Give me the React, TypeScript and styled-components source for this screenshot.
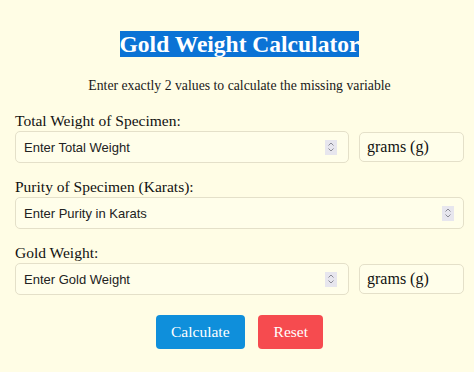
import React from "react";
import styled, { createGlobalStyle } from "styled-components";

const GlobalStyle = createGlobalStyle`
  html, body {
    margin: 0;
    padding: 0;
    background: #fffde5;
  }
  * { box-sizing: border-box; }
`;

const serif = `"Liberation Serif", "Times New Roman", serif`;
const sans = `"Liberation Sans", Arial, sans-serif`;

const Page = styled.div`
  min-height: 372px;
  padding: 31px 10px 0 15px;
  font-family: ${serif};
  color: #111;
  background: #fffde5;
`;

const Title = styled.h1`
  margin: 0;
  text-align: center;
  font-size: 23.5px;
  font-weight: bold;
  line-height: normal;
`;

const Highlight = styled.span`
  background: #0b73d5;
  color: #ffffff;
`;

const Subtitle = styled.p`
  margin: 20px 0 0;
  text-align: center;
  font-size: 13.75px;
  line-height: normal;
  color: #1a1a1a;
`;

const Form = styled.div`
  margin-top: 18px;
  display: flex;
  flex-direction: column;
  gap: 15px;
`;

const Field = styled.div`
  display: flex;
  flex-direction: column;
  gap: 1px;
`;

const Label = styled.label`
  font-size: 15.5px;
  line-height: 18px;
  color: #111;
`;

const Row = styled.div`
  display: flex;
  align-items: center;
  gap: 10px;
`;

const InputBox = styled.div`
  flex: 1;
  height: 32px;
  display: flex;
  align-items: center;
  border: 1px solid #e4e0c9;
  border-radius: 5px;
  background: #fffeea;
  padding: 0 ${(p: { $pr?: number }) => p.$pr ?? 11}px 0 8px;
`;

const Input = styled.input`
  flex: 1;
  min-width: 0;
  border: none;
  outline: none;
  background: transparent;
  padding: 0;
  font-family: ${sans};
  font-size: 13px;
  color: #222;
  &::placeholder {
    color: #222;
    opacity: 1;
  }
`;

const Spinner = styled.div`
  width: 12px;
  height: 15px;
  background: #e7e6ee;
  display: flex;
  align-items: center;
  justify-content: center;
`;

const Unit = styled.div`
  width: 105px;
  height: 30px;
  display: flex;
  align-items: center;
  padding-left: 7px;
  border: 1px solid #e4e0c9;
  border-radius: 5px;
  background: #fffeea;
  font-family: ${serif};
  font-size: 16px;
  color: #111;
`;

const Buttons = styled.div`
  margin-top: 20px;
  display: flex;
  justify-content: center;
  gap: 13px;
`;

const Button = styled.button<{ $bg: string }>`
  height: 34px;
  padding: 0 15.5px;
  border: none;
  border-radius: 4px;
  background: ${(p) => p.$bg};
  color: #ffffff;
  font-family: ${serif};
  font-size: 15.5px;
  cursor: pointer;
`;

const SpinIcon = () => (
  <svg width="8" height="12" viewBox="0 0 8 12" fill="none">
    <path d="M1.5 4.5 L4 2 L6.5 4.5" stroke="#8a8a94" strokeWidth="1" />
    <path d="M1.5 7.5 L4 10 L6.5 7.5" stroke="#8a8a94" strokeWidth="1" />
  </svg>
);

type FieldProps = {
  label: string;
  placeholder: string;
  unit?: boolean;
  pr?: number;
};

const NumberField = ({ label, placeholder, unit, pr }: FieldProps) => (
  <Field>
    <Label>{label}</Label>
    <Row>
      <InputBox $pr={pr}>
        <Input type="text" placeholder={placeholder} />
        <Spinner>
          <SpinIcon />
        </Spinner>
      </InputBox>
      {unit && <Unit>grams (g)</Unit>}
    </Row>
  </Field>
);

export default function App() {
  return (
    <>
      <GlobalStyle />
      <Page>
        <Title>
          <Highlight>Gold Weight Calculator</Highlight>
        </Title>
        <Subtitle>Enter exactly 2 values to calculate the missing variable</Subtitle>
        <Form>
          <NumberField label="Total Weight of Specimen:" placeholder="Enter Total Weight" unit />
          <NumberField label="Purity of Specimen (Karats):" placeholder="Enter Purity in Karats" pr={9} />
          <NumberField label="Gold Weight:" placeholder="Enter Gold Weight" unit />
        </Form>
        <Buttons>
          <Button $bg="#0f8fdb">Calculate</Button>
          <Button $bg="#f64b4f">Reset</Button>
        </Buttons>
      </Page>
    </>
  );
}
